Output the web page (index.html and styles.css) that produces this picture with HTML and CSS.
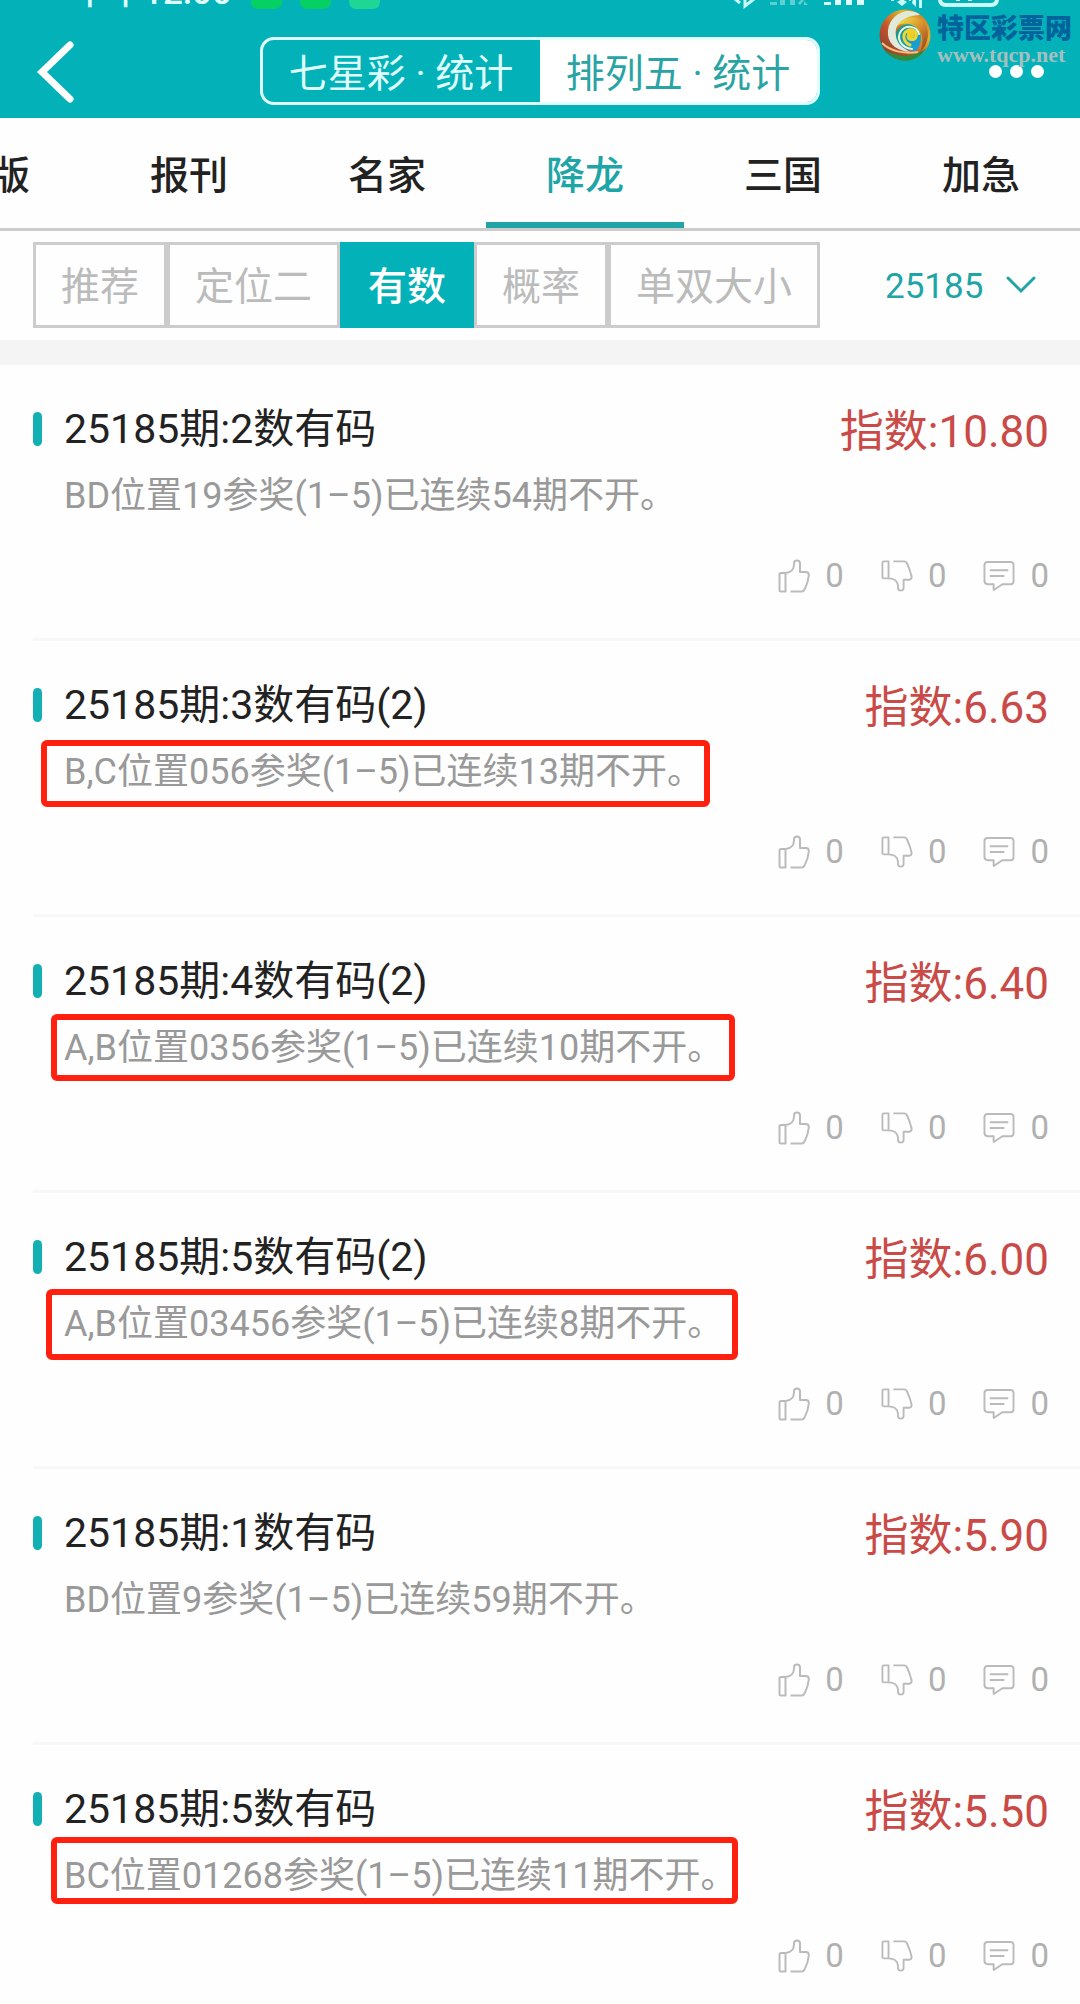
FILE: index.html
```html
<!DOCTYPE html>
<html lang="zh-CN">
<head>
    <meta charset="UTF-8">
    <meta name="viewport" content="width=device-width, initial-scale=1.0">
    <title>排列五 · 统计</title>
    <link rel="stylesheet" href="styles.css">
</head>
<body>
    <!-- shared icons -->
    <svg class="sprite" width="0" height="0">
        <symbol id="like" viewBox="0 0 32 34">
            <path d="M1.5 15.5Q1.5 14 3 14H7.5V32.5H3Q1.5 32.5 1.5 31ZM7.5 14C13 13.500 16 10 16 5.500V4.500Q16 1.500 19 1.500Q22 1.500 22 4.500V13H28.500Q31 13.500 30.800 16.500C30.200 22 28.500 27 26.500 30.500Q25.500 32.500 23.500 32.500H12.500"/>
        </symbol>
        <symbol id="dislike" viewBox="0 0 34 34">
            <path d="M1.500 3Q1.500 1.500 3 1.500H8V19.500H3Q1.500 19.500 1.500 18ZM13 1.500H24.500Q26.500 1.500 27.500 3.500C29.500 7.500 31.500 13 32.500 17.500Q33 20.500 30 21H24V29.500Q24 32.500 21 32.500Q18 32.500 18 29.500V27C17.500 22 13 19.500 8 19.500"/>
        </symbol>
        <symbol id="comment" viewBox="0 0 33 34">
            <path d="M5 2.500H28.500Q31.500 2.500 31.500 5.500V22.500Q31.500 25.500 28.500 25.500H20L11 31.500V25.500H5Q1.500 25.500 1.500 22V6Q1.500 2.500 5 2.500ZM7 11H26M7 17H22"/>
        </symbol>
    </svg>

    <header class="header">
        <div class="status">
            <span class="clock">下午12:00</span>
            <span class="app"></span><span class="app"></span><span class="app app-light"></span>
            <svg class="signals" width="270" height="10" viewBox="0 0 270 10">
                <g fill="none" stroke="#c9fbfb" stroke-width="3">
                    <path d="M1 0L6 4M11 -2V7L20 0"/>
                    <path d="M206 -10V0Q206 6 212 6H257Q263 6 263 0V-10" stroke-width="4"/>
                </g>
                <path d="M36 3h7v3h-7zM46 0h5v6h-5zM56 0h5v6h-5zM64 4l4-4h3l-5 6zM70 2l4 4h-4z" fill="#5ed0d2"/>
                <path d="M90 3h7v3h-7zM101 0h6v6h-6zM112 0h6v6h-6zM123 0h7v6h-7zM222 0h4v2h-4zM234 0h4v2h-4z" fill="#dffefe"/>
                <path d="M163 3l5-3 5 3-5 4zM157 0h3v2h-3zM179 0h3v8l-4-4zM185 9V0h3v9zM175 0h2v2h-2z" fill="#c9fbfb"/>
            </svg>
        </div>
        <div class="topbar">
            <button class="back" aria-label="返回">
                <svg width="40" height="64" viewBox="0 0 40 64"><path d="M35 6L7 33L35 60" fill="none" stroke="#fff" stroke-width="7" stroke-linecap="round"/></svg>
            </button>
            <div class="switch">
                <button>七星彩 · 统计</button>
                <button class="on">排列五 · 统计</button>
            </div>
            <button class="more" aria-label="更多"><i></i><i></i><i></i></button>
        </div>
        <div class="brand">
            <svg width="52" height="52" viewBox="0 0 52 52">
                <defs>
                    <linearGradient id="g1" x1="0" y1="1" x2="1" y2="0">
                        <stop offset="0" stop-color="#6e3d36"/><stop offset=".4" stop-color="#c5522a"/>
                        <stop offset=".7" stop-color="#e0b52c"/><stop offset="1" stop-color="#d9552a"/>
                    </linearGradient>
                    <linearGradient id="g2" x1="0" y1="0" x2="1" y2="1">
                        <stop offset="0" stop-color="#f4ec4e"/><stop offset=".5" stop-color="#d9902c"/><stop offset="1" stop-color="#8b3a22"/>
                    </linearGradient>
                    <linearGradient id="g3" x1="0" y1="0" x2="1" y2="1">
                        <stop offset="0" stop-color="#0c9a84"/><stop offset="1" stop-color="#1aa0e8"/>
                    </linearGradient>
                </defs>
                <circle cx="26" cy="26" r="25.500" fill="url(#g1)"/>
                <path d="M6 41C16 48 34 50 47 39C41 49 33 52 25 51.500C17 51 10 47 6 41Z" fill="#2c8d3a"/>
                <path d="M9 26C8 14 15 5 27 2C34 2 38 3 41 6C30 6 20 11 17 20C15 29 21 37 31 43C19 42 10 36 9 26Z" fill="#dfeadb"/>
                <path d="M18 17C24 7 38 6 45 13C52 22 49 36 41 43C45 33 44 24 38 19C32 14 24 13 18 17Z" fill="url(#g2)"/>
                <path d="M17 27C17 18 27 12 35 17C44 22 44 34 37 42C27 43 18 36 17 27Z" fill="url(#g3)"/>
                <path d="M33 40C22 39 17 29 22 22C27 15 38 17 40 25" fill="none" stroke="#eef4d8" stroke-width="2" stroke-linecap="round"/>
                <path d="M31 36C24 33 23 25 28 22C33 19 39 23 37 28C35 32 29 31 29 27" fill="none" stroke="#efd53a" stroke-width="3" stroke-linecap="round"/>
                <circle cx="32" cy="25" r="4" fill="#efcf25"/>
                <path d="M3 34C12 43 27 45 39 43" fill="none" stroke="#f4c27a" stroke-width="2"/>
            </svg>
            <div class="brand-text">
                <strong>特区彩票网</strong>
                <span>www.tqcp.net</span>
            </div>
        </div>
    </header>

    <nav class="tabs">
        <button class="cut">版</button>
        <button>报刊</button>
        <button>名家</button>
        <button class="active">降龙</button>
        <button>三国</button>
        <button>加急</button>
    </nav>

    <div class="filters">
        <div class="types">
            <button>推荐</button>
            <button>定位二</button>
            <button class="active">有数</button>
            <button>概率</button>
            <button>单双大小</button>
        </div>
        <label class="issue">
            <select aria-label="期号"><option>25185</option></select>
            <svg width="30" height="18" viewBox="0 0 30 18"><path d="M2 2L15 15L28 2" fill="none" stroke="#1fa5a6" stroke-width="3" stroke-linecap="round"/></svg>
        </label>
    </div>

    <main class="list">
        <article class="card">
            <div class="head"><h2>25185期:2数有码</h2><span class="index">指数:10.80</span></div>
            <p>BD位置19参奖(1–5)已连续54期不开。</p>
            <div class="meta">
                <button><svg class="icon"><use href="#like"/></svg>0</button>
                <button><svg class="icon"><use href="#dislike"/></svg>0</button>
                <button><svg class="icon"><use href="#comment"/></svg>0</button>
            </div>
        </article>
        <article class="card">
            <div class="head"><h2>25185期:3数有码(2)</h2><span class="index">指数:6.63</span></div>
            <p>B,C位置056参奖(1–5)已连续13期不开。</p>
            <div class="mark mark-a"></div>
            <div class="meta">
                <button><svg class="icon"><use href="#like"/></svg>0</button>
                <button><svg class="icon"><use href="#dislike"/></svg>0</button>
                <button><svg class="icon"><use href="#comment"/></svg>0</button>
            </div>
        </article>
        <article class="card">
            <div class="head"><h2>25185期:4数有码(2)</h2><span class="index">指数:6.40</span></div>
            <p>A,B位置0356参奖(1–5)已连续10期不开。</p>
            <div class="mark mark-b"></div>
            <div class="meta">
                <button><svg class="icon"><use href="#like"/></svg>0</button>
                <button><svg class="icon"><use href="#dislike"/></svg>0</button>
                <button><svg class="icon"><use href="#comment"/></svg>0</button>
            </div>
        </article>
        <article class="card">
            <div class="head"><h2>25185期:5数有码(2)</h2><span class="index">指数:6.00</span></div>
            <p>A,B位置03456参奖(1–5)已连续8期不开。</p>
            <div class="mark mark-c"></div>
            <div class="meta">
                <button><svg class="icon"><use href="#like"/></svg>0</button>
                <button><svg class="icon"><use href="#dislike"/></svg>0</button>
                <button><svg class="icon"><use href="#comment"/></svg>0</button>
            </div>
        </article>
        <article class="card">
            <div class="head"><h2>25185期:1数有码</h2><span class="index">指数:5.90</span></div>
            <p>BD位置9参奖(1–5)已连续59期不开。</p>
            <div class="meta">
                <button><svg class="icon"><use href="#like"/></svg>0</button>
                <button><svg class="icon"><use href="#dislike"/></svg>0</button>
                <button><svg class="icon"><use href="#comment"/></svg>0</button>
            </div>
        </article>
        <article class="card">
            <div class="head"><h2>25185期:5数有码</h2><span class="index">指数:5.50</span></div>
            <p>BC位置01268参奖(1–5)已连续11期不开。</p>
            <div class="mark mark-d"></div>
            <div class="meta">
                <button><svg class="icon"><use href="#like"/></svg>0</button>
                <button><svg class="icon"><use href="#dislike"/></svg>0</button>
                <button><svg class="icon"><use href="#comment"/></svg>0</button>
            </div>
        </article>
    </main>
</body>
</html>
```
FILE: styles.css
```css
* { box-sizing: border-box; }
body { margin: 0; background-color: #fefefe; color: #222; font-family: Roboto, 'Noto Sans CJK SC', sans-serif; }
button, select { font: inherit; color: inherit; background: none; border: none; margin: 0; padding: 0; cursor: pointer; }
svg { display: block; }
.sprite { position: absolute; }

/* header */
.header { position: relative; background-color: #03b2b8; height: 118px; }
.status { display: flex; align-items: flex-end; height: 9px; padding: 0 76px 0 73px; overflow: hidden; color: #dffefe; }
.clock { width: 178px; font-size: 35px; line-height: 32px; font-weight: 500; white-space: nowrap; }
.app { width: 31px; height: 31px; margin-right: 18px; border-radius: 7px; background-color: #06cf63; }
.app-light { background-color: #1fd694; }
.signals { margin-left: auto; }
.topbar { display: flex; align-items: center; justify-content: space-between; height: 68px; margin-top: 28px; padding: 0 36px 0 35px; }
.back, .more { width: 60px; }
.switch { display: flex; width: 560px; height: 68px; border: 3px solid #dffefe; border-radius: 14px; overflow: hidden; color: #dffefe; font-size: 39px; line-height: 39px; }
.switch button { flex: 1; padding-top: 6px; white-space: nowrap; }
.switch .on { background-color: #fff; color: #2aa3a5; }
.more { display: flex; justify-content: flex-end; gap: 8px; }
.more i { width: 13px; height: 13px; border-radius: 50%; background-color: #fff; }
.brand { position: absolute; right: 8px; top: 9px; display: flex; gap: 6px; }
.brand-text { display: flex; flex-direction: column; font-family: 'Noto Sans CJK SC', sans-serif; }
.brand-text strong { font-size: 27px; line-height: 34px; padding-top: 1px; font-weight: 900; color: #00639c; }
.brand-text span { font-family: 'Liberation Serif', serif; font-weight: bold; font-size: 22px; line-height: 22px; color: #a5bfc0; }

/* tabs */
.tabs { display: flex; justify-content: flex-end; overflow: hidden; height: 113px; border-bottom: 3px solid #ccc; font-size: 39px; line-height: 48px; font-weight: 500; }
.tabs button { flex: 0 0 198px; padding-top: 12px; border-bottom: 6px solid transparent; }
.tabs .cut { padding-left: 39px; }
.tabs .active { color: #20a5a7; border-bottom-color: #20a5a7; }

/* filters */
.filters { display: flex; justify-content: space-between; align-items: center; height: 134px; padding: 11px 44px 12px 33px; border-bottom: 25px solid #f4f4f4; }
.types { display: flex; font-size: 39px; line-height: 80px; color: #bbb; }
.types button { padding: 2px 25px 0; height: 86px; border: 3px solid #ccc; white-space: nowrap; }
.types .active { background-color: #03b2b8; border-color: #03b2b8; color: #fff; font-weight: 500; }
.issue { display: flex; align-items: center; gap: 22px; }
.issue select { appearance: none; padding-top: 3px; font-size: 35px; color: #1fa5a6; }

/* list */
.card { position: relative; margin-left: 33px; padding: 36px 31px 44px 0; border-bottom: 3px solid #f8f8f8; }
.card:last-child { padding-bottom: 30px; border-bottom: none; }
.head { display: flex; align-items: center; height: 56px; line-height: 52px; }
.head::before { content: ''; width: 9px; height: 34px; margin-right: 22px; border-radius: 5px; background-color: #12b0b2; }
.head h2 { flex: 1; margin: 0; font-size: 41px; font-weight: 400; }
.index { padding-top: 5px; font-size: 44px; color: #c94a47; }
.card p { margin: 15px 0 38px 31px; font-size: 36px; line-height: 48px; color: #999; }
.meta { display: flex; justify-content: flex-end; gap: 37px; color: #b0b0b0; font-size: 33px; line-height: 40px; }
.meta button { display: flex; align-items: center; gap: 15px; height: 36px; }
.icon { width: 32px; height: 34px; fill: none; stroke: #bbb; stroke-width: 2px; stroke-linejoin: round; }

/* red frames drawn over the picks */
.mark { position: absolute; border: 6px solid #ff2010; border-radius: 6px; }
.mark-a { left: 8px; top: 99px; width: 669px; height: 67px; }
.mark-b { left: 18px; top: 97px; width: 684px; height: 67px; }
.mark-c { left: 13px; top: 96px; width: 692px; height: 71px; }
.mark-d { left: 18px; top: 92px; width: 687px; height: 67px; }
```
